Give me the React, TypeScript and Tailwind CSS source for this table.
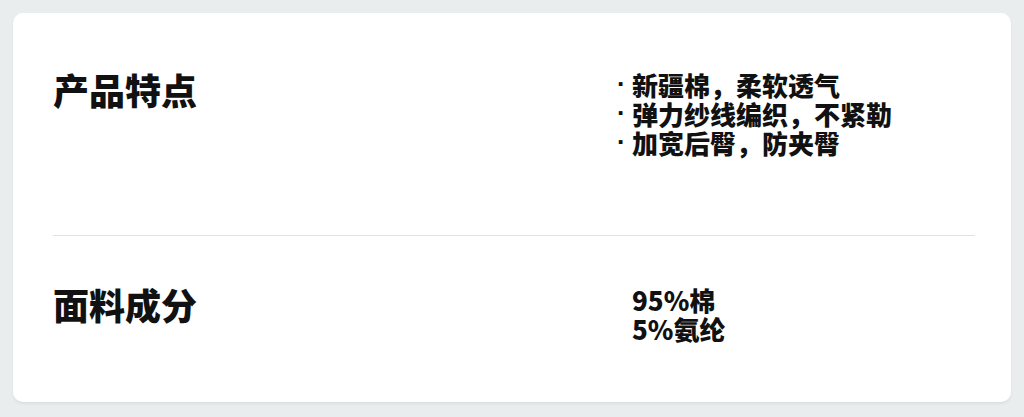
const font = { fontFamily: '"Noto Sans CJK SC", "Noto Sans", sans-serif' }

const features = ['新疆棉，柔软透气', '弹力纱线编织，不紧勒', '加宽后臀，防夹臀']
const fabric = ['95%棉', '5%氨纶']

export default function App() {
  return (
    <div className="w-[1024px] h-[417px] bg-[#e9eded] p-[13px]" style={font}>
      <div className="h-[389px] bg-white rounded-[10px] pl-[40px] pr-[36px] shadow-[0_2px_3px_rgba(0,0,0,0.06)]">
        {/* 产品特点 */}
        <div className="h-[222px] pt-[56px] flex items-start">
          <div className="w-[564px] text-[36px] leading-[40px] font-black text-[#111]">产品特点</div>
          <ul className="mt-[1px] text-[26px] leading-[29px] font-black text-[#111]">
            {features.map((f) => (
              <li key={f} className="flex">
                <span className="w-[15px] shrink-0 font-['Liberation_Sans'] font-bold">·</span>
                <span>{f}</span>
              </li>
            ))}
          </ul>
        </div>

        <div className="h-px bg-[#e2e2e2]" />

        {/* 面料成分 */}
        <div className="pt-[48px] flex items-start">
          <div className="w-[579px] text-[36px] leading-[40px] font-black text-[#111]">面料成分</div>
          <div className="mt-[1px] text-[26px] leading-[29px] font-black text-[#111]">
            {fabric.map((f) => (
              <div key={f}>{f}</div>
            ))}
          </div>
        </div>
      </div>
    </div>
  )
}
